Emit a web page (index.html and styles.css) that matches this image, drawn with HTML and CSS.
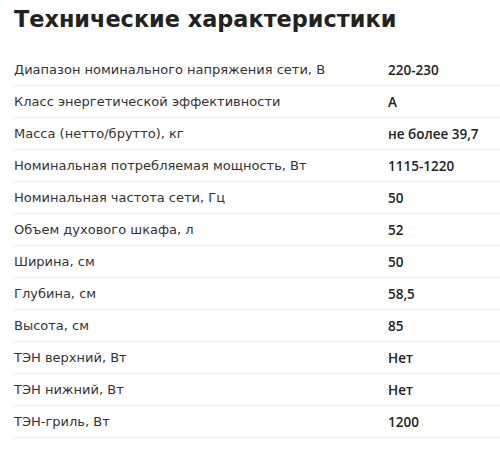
FILE: index.html
```html
<!DOCTYPE html>
<html lang="ru">
<head>
<meta charset="utf-8">
<link rel="stylesheet" href="styles.css">
</head>
<body>
<div class="specs">
  <h2 class="specs-title">Технические характеристики</h2>
  <div class="specs-table">
    <div class="row"><div class="name">Диапазон номинального напряжения сети, В</div><div class="value">220-230</div></div>
    <div class="row"><div class="name">Класс энергетической эффективности</div><div class="value">A</div></div>
    <div class="row"><div class="name">Масса (нетто/брутто), кг</div><div class="value">не более 39,7</div></div>
    <div class="row"><div class="name">Номинальная потребляемая мощность, Вт</div><div class="value">1115-1220</div></div>
    <div class="row"><div class="name">Номинальная частота сети, Гц</div><div class="value">50</div></div>
    <div class="row"><div class="name">Объем духового шкафа, л</div><div class="value">52</div></div>
    <div class="row"><div class="name">Ширина, см</div><div class="value">50</div></div>
    <div class="row"><div class="name">Глубина, см</div><div class="value">58,5</div></div>
    <div class="row"><div class="name">Высота, см</div><div class="value">85</div></div>
    <div class="row"><div class="name">ТЭН верхний, Вт</div><div class="value">Нет</div></div>
    <div class="row"><div class="name">ТЭН нижний, Вт</div><div class="value">Нет</div></div>
    <div class="row"><div class="name">ТЭН-гриль, Вт</div><div class="value">1200</div></div>
  </div>
</div>
</body>
</html>
```
FILE: styles.css
```css
html, body {
  margin: 0;
  padding: 0;
  background: #ffffff;
}
.specs {
  padding: 0 0 0 14px;
  font-family: "DejaVu Sans", sans-serif;
  color: #2b2b2b;
}
.specs-title {
  margin: 0;
  padding-top: 4px;
  height: 54px;
  box-sizing: border-box;
  font-size: 22.4px;
  line-height: 30px;
  font-weight: 700;
  color: #222222;
}
.specs-table {
  display: flex;
  flex-direction: column;
}
.row {
  display: grid;
  grid-template-columns: 374px 1fr;
  height: 32px;
  box-sizing: border-box;
  align-items: center;
  border-bottom: 1px solid #ececec;
  font-size: 13px;
}
.name {
  color: #333333;
}
.value {
  font-family: "Open Sans", "DejaVu Sans", sans-serif;
  font-size: 13.5px;
  font-weight: 600;
  color: #222222;
}
```
